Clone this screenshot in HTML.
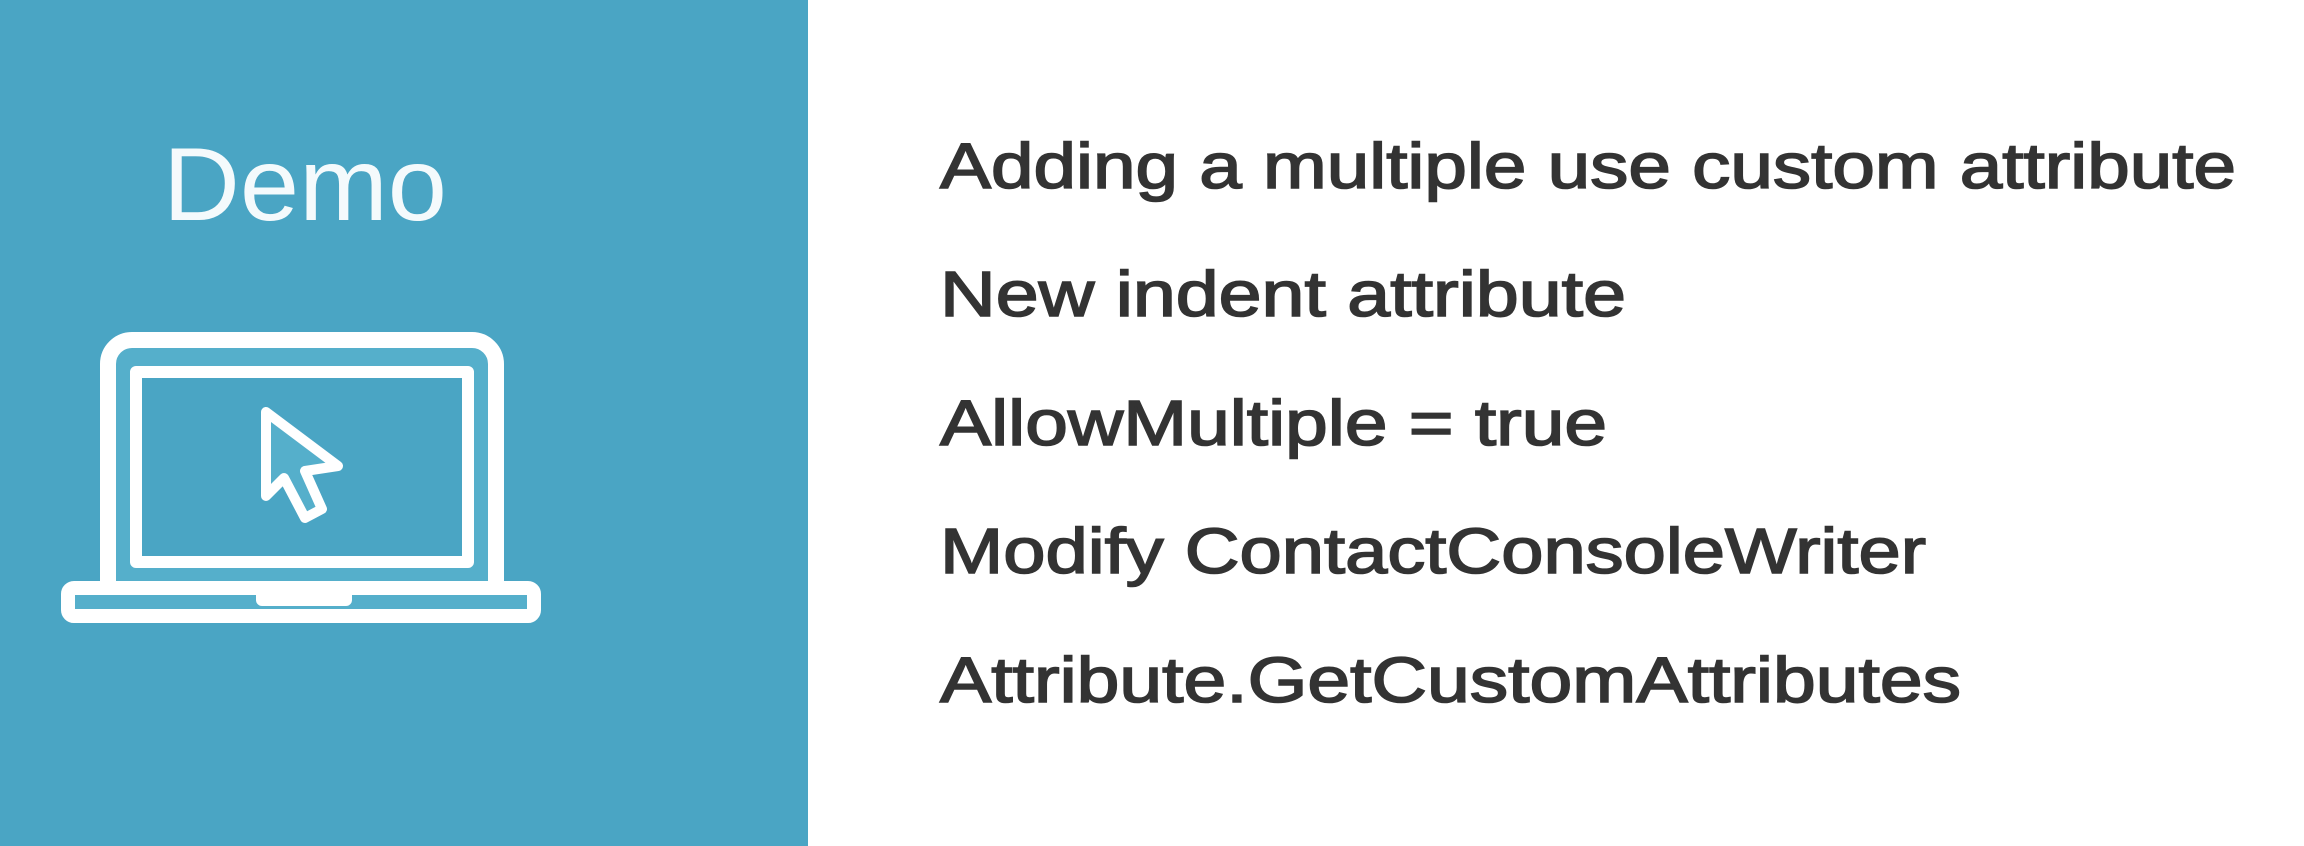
<!DOCTYPE html>
<html><head><meta charset="utf-8"><style>
html,body{margin:0;padding:0;width:2304px;height:846px;overflow:hidden;background:#fff}
svg{display:block}
</style></head><body>
<svg width="2304" height="846" viewBox="0 0 2304 846" xmlns="http://www.w3.org/2000/svg">
<rect x="0" y="0" width="808" height="846" fill="#4aa5c4"/>
<text x="163" y="220" font-family="Liberation Sans, sans-serif" font-size="104" fill="#f4fafc" textLength="284" lengthAdjust="spacingAndGlyphs">Demo</text>
<g fill="none" stroke="#fff" stroke-linejoin="round">
<path d="M108 582 V364 a24 24 0 0 1 24 -24 H472 a24 24 0 0 1 24 24 V582" stroke-width="16" fill="#55afcb"/>
<rect x="136" y="372" width="332" height="190" stroke-width="12" fill="#4aa5c4"/>
<path d="M74 588 H528 a6 6 0 0 1 6 6 V610 a6 6 0 0 1 -6 6 H74 a6 6 0 0 1 -6 -6 V594 a6 6 0 0 1 6 -6 Z" stroke-width="14" fill="#55afcb"/>
<path d="M262 590 V600 H346 V590" stroke-width="12"/>
<path d="M266 412 L266 496 L284 478 L305 518 L322 509 L305 471 L338 466 Z" stroke-width="10" fill="#55afcb"/>
</g>
<g font-family="Liberation Sans, sans-serif" font-size="64" fill="#333" stroke="#333" stroke-width="1.6">
<text x="940" y="188" textLength="1296" lengthAdjust="spacingAndGlyphs">Adding a multiple use custom attribute</text>
<text x="940" y="316" textLength="686" lengthAdjust="spacingAndGlyphs">New indent attribute</text>
<text x="940" y="445" textLength="667" lengthAdjust="spacingAndGlyphs">AllowMultiple = true</text>
<text x="940" y="573" textLength="986" lengthAdjust="spacingAndGlyphs">Modify ContactConsoleWriter</text>
<text x="940" y="702" textLength="1021" lengthAdjust="spacingAndGlyphs">Attribute.GetCustomAttributes</text>
</g>
</svg>
</body></html>
